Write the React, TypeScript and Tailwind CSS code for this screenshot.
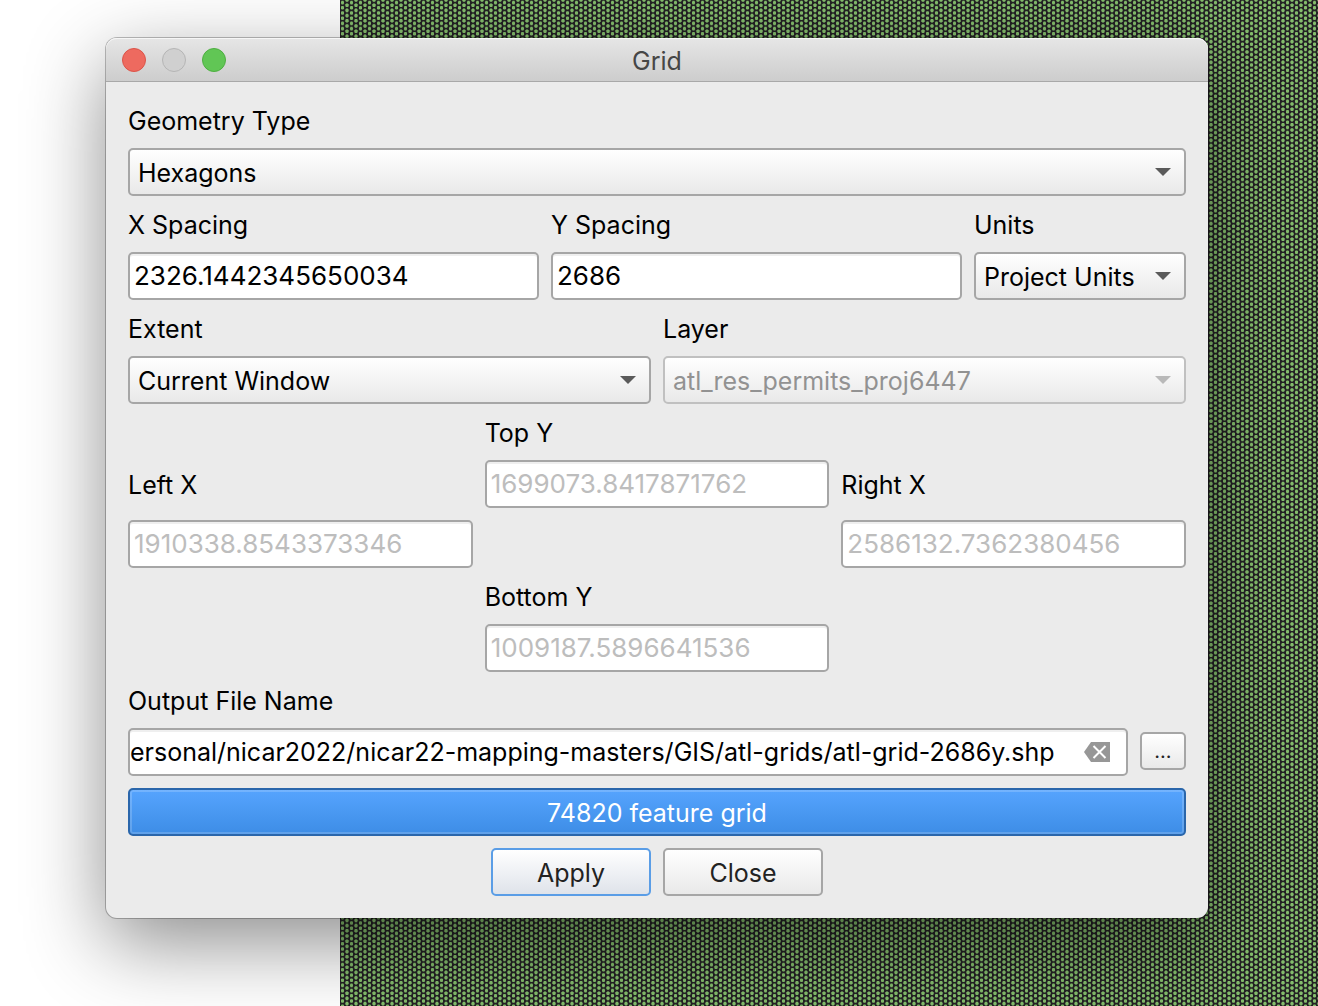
import type { ReactNode, SelectHTMLAttributes, InputHTMLAttributes } from "react";

const PITCH_Y = 5.2;

function HexMap() {
  return (
    <svg className="absolute inset-y-0 right-0 left-[340px] h-full w-[calc(100%-340px)]" aria-hidden="true">
      <defs>
        <pattern id="hexes" width="9" height={PITCH_Y * 5} patternUnits="userSpaceOnUse">
          <rect width="9" height="26" fill="#242225" />
          {[0, 1, 2, 3, 4, 5].map((row) => (
            <g key={row} fill="#84bd6c" transform={`translate(0 ${row * PITCH_Y})`}>
              <path d="M1 1.4h.5V.8h2v.6H4v2.4h-.5v.6h-2v-.6H1z" />
              <path d="M5.3-1.2H6v-.6h2v.6h.7v2.4H8v.6H6v-.6h-.7z" />
            </g>
          ))}
        </pattern>
      </defs>
      <rect width="100%" height="100%" fill="url(#hexes)" />
    </svg>
  );
}

function Label({ htmlFor, children, className = "h-8" }: { htmlFor: string; children: ReactNode; className?: string }) {
  return (
    <label htmlFor={htmlFor} className={`flex items-center pt-0.5 whitespace-nowrap ${className}`}>
      {children}
    </label>
  );
}

function Select({ children, ...rest }: SelectHTMLAttributes<HTMLSelectElement>) {
  return (
    <div className="relative h-12">
      <select
        {...rest}
        className="h-full w-full appearance-none rounded-[5px] border-2 border-[#a6a6a6] bg-linear-to-b from-white to-[#e9e9e9] pt-0.5 pr-10 pl-2 text-black disabled:border-[#c0c0c0] disabled:text-[#929292] disabled:opacity-100"
      >
        {children}
      </select>
      <svg
        className={`pointer-events-none absolute top-5 right-[15px] h-2 w-4 ${rest.disabled ? "text-[#b9b9b9]" : "text-[#5a5a5a]"}`}
        viewBox="0 0 16 8"
        aria-hidden="true"
      >
        <path d="M0 0h16L8 8z" fill="currentColor" />
      </svg>
    </div>
  );
}

function Input({ className = "", ...rest }: InputHTMLAttributes<HTMLInputElement>) {
  return (
    <input
      type="text"
      {...rest}
      className={`h-12 w-full min-w-0 rounded-[5px] border-2 border-[#a6a6a6] bg-white px-1 pb-0.5 text-[26px] text-black shadow-[inset_0_2px_0_#efefef] disabled:text-[#bdbdbd] ${className}`}
    />
  );
}

const pushButton =
  "h-12 w-40 rounded-[5px] border-2 bg-linear-to-b from-white pt-0.5 text-[#222222]";

export default function App() {
  return (
    <div className="relative min-h-screen overflow-hidden bg-white pt-[38px] pr-[110px] pb-[88px] pl-[106px] font-[Inter,'Liberation_Sans',sans-serif] text-[25px] leading-8 text-black">
      <HexMap />
      <main className="relative rounded-[11px] bg-[#ebebeb] shadow-[0_0_0_1px_rgba(0,0,0,0.25),0_25px_80px_rgba(0,0,0,0.45)]">
        <header className="grid h-11 grid-cols-[1fr_auto_1fr] items-center rounded-t-[11px] border-b border-[#a8a8a8] bg-linear-to-b from-[#e6e6e6] to-[#cdcdcd] px-4 pt-px shadow-[inset_0_1px_0_#f6f6f6]">
          <div className="flex gap-4">
            <button aria-label="Close window" className="size-6 rounded-full border border-[#dc5449] bg-[#ee6a5f]" />
            <button aria-label="Minimize window" className="size-6 rounded-full border border-[#b5b5b5] bg-[#d0d0d0]" />
            <button aria-label="Zoom window" className="size-6 rounded-full border border-[#4eaf41] bg-[#61c655]" />
          </div>
          <h1 className="pt-0.5 text-[#464646]">Grid</h1>
        </header>

        <form className="flex flex-col gap-3 p-[22px]" onSubmit={(e) => e.preventDefault()}>
          <div className="grid gap-3">
            <Label htmlFor="geometry">Geometry Type</Label>
            <Select id="geometry">
              <option>Hexagons</option>
            </Select>
          </div>

          <div className="grid grid-cols-[1fr_1fr_212px] gap-3">
            <div className="grid gap-3">
              <Label htmlFor="xs">X Spacing</Label>
              <Input id="xs" defaultValue="2326.1442345650034" />
            </div>
            <div className="grid gap-3">
              <Label htmlFor="ys">Y Spacing</Label>
              <Input id="ys" defaultValue="2686" />
            </div>
            <div className="grid gap-3">
              <Label htmlFor="units">Units</Label>
              <Select id="units">
                <option>Project Units</option>
              </Select>
            </div>
          </div>

          <div className="grid grid-cols-2 gap-3">
            <div className="grid gap-3">
              <Label htmlFor="extent">Extent</Label>
              <Select id="extent">
                <option>Current Window</option>
              </Select>
            </div>
            <div className="grid gap-3">
              <Label htmlFor="layer">Layer</Label>
              <Select id="layer" disabled>
                <option>atl_res_permits_proj6447</option>
              </Select>
            </div>
          </div>

          <div className="grid grid-cols-3 gap-3">
            <Label htmlFor="top" className="col-start-2 h-8">Top Y</Label>
            <Label htmlFor="left" className="col-start-1 row-start-2 h-12">Left X</Label>
            <Input id="top" className="col-start-2 row-start-2" disabled defaultValue="1699073.8417871762" />
            <Label htmlFor="right" className="col-start-3 row-start-2 h-12">Right X</Label>
            <Input id="left" className="col-start-1 row-start-3" disabled defaultValue="1910338.8543373346" />
            <Input id="right" className="col-start-3 row-start-3" disabled defaultValue="2586132.7362380456" />
            <Label htmlFor="bottom" className="col-start-2 row-start-4 h-8">Bottom Y</Label>
            <Input id="bottom" className="col-start-2 row-start-5" disabled defaultValue="1009187.5896641536" />
          </div>

          <div className="grid gap-3">
            <Label htmlFor="output">Output File Name</Label>
            <div className="flex gap-3">
              <div className="flex h-12 min-w-0 flex-1 items-center rounded-[5px] border-2 border-[#a6a6a6] bg-white pr-4 shadow-[inset_0_2px_0_#efefef]">
                <input
                  id="output"
                  type="text"
                  className="h-full min-w-0 flex-1 bg-transparent outline-none"
                  defaultValue="ersonal/nicar2022/nicar22-mapping-masters/GIS/atl-grids/atl-grid-2686y.shp"
                />
                <button type="button" aria-label="Clear" className="ml-3">
                  <svg className="h-5 w-[26px]" viewBox="0 0 26 20" aria-hidden="true">
                    <path d="M0 10 7 0h19v20H7z" fill="#979797" />
                    <path d="m9.5 4 12 12m0-12-12 12" stroke="#fff" strokeWidth="2" />
                  </svg>
                </button>
              </div>
              <button
                type="button"
                aria-label="Browse"
                className="mt-1 h-[38px] w-[46px] rounded-[5px] border-2 border-[#a6a6a6] bg-linear-to-b from-white to-[#e9e9e9] text-xl leading-8 text-[#222222]"
              >
                ...
              </button>
            </div>
          </div>

          <output className="flex h-12 items-center justify-center rounded-[5px] border-2 border-[#2a66ab] bg-linear-to-b from-[#56a4fe] to-[#3d8de6] pt-0.5 text-white shadow-[inset_0_0_0_2px_rgba(255,255,255,0.18)]">
            74820 feature grid
          </output>

          <div className="flex justify-center gap-3">
            <button type="submit" className={`${pushButton} border-[#5a9de6] to-[#dfe3ea]`}>Apply</button>
            <button type="button" className={`${pushButton} border-[#a6a6a6] to-[#e9e9e9]`}>Close</button>
          </div>
        </form>
      </main>
    </div>
  );
}
